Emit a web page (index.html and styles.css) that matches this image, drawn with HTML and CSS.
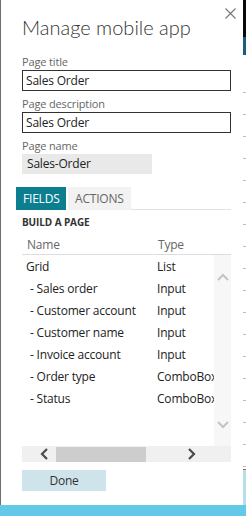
FILE: index.html
```html
<!DOCTYPE html>
<html>
    <head>
        <title>Manage mobile app</title>
        <meta name="viewport" content="width=device-width, initial-scale=1.0">
        <link rel="stylesheet" href="styles.css">
    </head>
    <body>
        <div class="screen">
            <div class="panel">
                <div class="panel-top">
                    <button class="close" title="Close">
                        <svg width="11" height="11" viewBox="0 0 11 11">
                            <path d="M0.5 0.5 L10.5 10.5 M10.5 0.5 L0.5 10.5" stroke="#777" stroke-width="1.1" fill="none"/>
                        </svg>
                    </button>
                </div>
                <h1>Manage mobile app</h1>

                <label class="field-label">Page title</label>
                <input class="field" type="text" value="Sales Order">

                <label class="field-label">Page description</label>
                <input class="field" type="text" value="Sales Order">

                <label class="field-label">Page name</label>
                <div class="field-readonly">Sales-Order</div>

                <div class="tabs">
                    <div class="tab active">FIELDS</div>
                    <div class="tab">ACTIONS</div>
                    <div class="tab-rest"></div>
                </div>

                <div class="section-title">BUILD A PAGE</div>

                <div class="grid">
                    <div class="grid-head">
                        <div class="col-name">Name</div>
                        <div class="col-type">Type</div>
                    </div>
                    <div class="grid-body">
                        <div class="rows">
                            <div class="row"><span class="col-name">Grid</span><span class="col-type">List</span></div>
                            <div class="row child"><span class="col-name">- Sales order</span><span class="col-type">Input</span></div>
                            <div class="row child"><span class="col-name">- Customer account</span><span class="col-type">Input</span></div>
                            <div class="row child"><span class="col-name">- Customer name</span><span class="col-type">Input</span></div>
                            <div class="row child"><span class="col-name">- Invoice account</span><span class="col-type">Input</span></div>
                            <div class="row child"><span class="col-name">- Order type</span><span class="col-type">ComboBox</span></div>
                            <div class="row child"><span class="col-name">- Status</span><span class="col-type">ComboBox</span></div>
                        </div>
                        <div class="vscroll">
                            <svg width="12" height="8" viewBox="0 0 12 8">
                                <path d="M1 7 L6 2 L11 7" stroke="#c4c4c4" stroke-width="2" fill="none"/>
                            </svg>
                            <svg width="12" height="8" viewBox="0 0 12 8">
                                <path d="M1 1 L6 6 L11 1" stroke="#c4c4c4" stroke-width="2" fill="none"/>
                            </svg>
                        </div>
                    </div>
                    <div class="hscroll">
                        <svg class="arrow" width="8" height="12" viewBox="0 0 8 12">
                            <path d="M7 1 L2 6 L7 11" stroke="#4a4a4a" stroke-width="2.2" fill="none"/>
                        </svg>
                        <div class="thumb"></div>
                        <div class="track"></div>
                        <svg class="arrow" width="8" height="12" viewBox="0 0 8 12">
                            <path d="M1 1 L6 6 L1 11" stroke="#4a4a4a" stroke-width="2.2" fill="none"/>
                        </svg>
                    </div>
                </div>

                <button class="done">Done</button>
            </div>
            <div class="backdrop">
                <div class="bd-top"></div>
                <div class="bd-bar"></div>
                <div class="bd-lines"></div>
                <div class="bd-foot"></div>
            </div>
        </div>
        <div class="taskbar"></div>
    </body>
</html>
```

FILE: styles.css
```css
body {
    margin: 0;
    font-family: "Open Sans", "Noto Sans", Arial, sans-serif;
    color: #222;
    background-color: #fff;
}

.screen {
    display: flex;
    height: 505px;
}

.panel {
    width: 243px;
    box-sizing: border-box;
    border-left: 1px solid #6e6e6e;
    padding: 0 12px 0 21px;
    display: flex;
    flex-direction: column;
}

.panel-top {
    display: flex;
    justify-content: flex-end;
    align-items: flex-start;
    height: 15px;
    padding-top: 8px;
    box-sizing: border-box;
    margin-right: -5px;
}

.close {
    border: none;
    background: none;
    padding: 0;
    width: 11px;
    height: 11px;
    flex-shrink: 0;
    cursor: pointer;
}

.close svg {
    display: block;
}

h1 {
    font-family: Lato, "Open Sans", sans-serif;
    font-size: 20px;
    font-weight: 300;
    color: #333;
    margin: 0 0 10px;
    line-height: 24px;
}

.field-label {
    font-size: 11px;
    color: #666;
    line-height: 15px;
    letter-spacing: -0.15px;
    margin: 5px 0 1px;
}

.field {
    width: 209px;
    height: 21px;
    box-sizing: border-box;
    border: 1px solid #333;
    font-family: inherit;
    font-size: 12px;
    letter-spacing: -0.2px;
    color: #222;
    padding: 0 3px;
    margin: 0;
    outline: none;
}

.field-readonly {
    width: 130px;
    height: 20px;
    box-sizing: border-box;
    background-color: #e9e9e9;
    font-size: 12px;
    letter-spacing: -0.2px;
    line-height: 20px;
    padding-left: 5px;
}

.tabs {
    display: flex;
    margin-top: 13px;
    margin-left: -6px;
    width: 215px;
    height: 23px;
}

.tab {
    width: 63px;
    box-sizing: border-box;
    font-size: 12px;
    letter-spacing: -0.2px;
    line-height: 23px;
    padding-left: 7px;
    background-color: #f2f2f2;
    color: #666;
    margin-right: 2px;
}

.tab.active {
    width: 50px;
    background-color: #0b7f8f;
    color: #fff;
}

.tab-rest {
    flex: 1;
    border-bottom: 1px solid #e3e3e3;
    margin-left: -2px;
}

.section-title {
    font-size: 10px;
    font-weight: 700;
    color: #333;
    letter-spacing: -0.1px;
    margin-top: 5px;
    line-height: 14px;
}

.grid {
    margin-top: 7px;
    width: 209px;
}

.grid-head {
    display: flex;
    font-size: 12px;
    letter-spacing: -0.2px;
    color: #666;
    line-height: 18px;
}

.grid-head .col-name {
    width: 131px;
    padding-left: 5px;
    box-sizing: border-box;
    border-bottom: 1px solid #ddd;
    margin-right: 1px;
}

.grid-head .col-type {
    flex: 1;
    padding-left: 4px;
    border-bottom: 1px solid #ddd;
}

.grid-body {
    display: flex;
    height: 191px;
}

.rows {
    flex: 1;
    padding-top: 1px;
    overflow: hidden;
}

.row {
    display: flex;
    font-size: 12px;
    letter-spacing: -0.2px;
    line-height: 22px;
    white-space: nowrap;
}

.row .col-name {
    width: 135px;
    box-sizing: border-box;
    padding-left: 4px;
    flex-shrink: 0;
}

.row.child .col-name {
    padding-left: 8px;
}

.vscroll {
    width: 17px;
    background-color: #f7f7f7;
    display: flex;
    flex-direction: column;
    justify-content: space-between;
    align-items: center;
    padding: 18px 0 17px;
    box-sizing: border-box;
}

.vscroll svg {
    display: block;
}

.hscroll {
    display: flex;
    align-items: center;
    height: 16px;
    background-color: #f0f0f0;
}

.hscroll .arrow {
    display: block;
    margin: 0 8px 0 18px;
}

.hscroll .arrow:last-child {
    margin: 0 35px 0 0;
}

.thumb {
    width: 90px;
    height: 15px;
    background-color: #cdcdcd;
}

.track {
    flex: 1;
}

.done {
    margin-top: 8px;
    width: 84px;
    height: 21px;
    border: none;
    background-color: #cfe4ea;
    font-family: inherit;
    font-size: 12px;
    letter-spacing: -0.2px;
    color: #333;
    padding: 0;
    cursor: pointer;
}

.backdrop {
    flex: 1;
    display: flex;
    flex-direction: column;
    background-color: #fff;
}

.bd-top {
    height: 37px;
    background-color: #0a0a0a;
}

.bd-bar {
    height: 18px;
    background-color: #1d5d78;
}

.bd-lines {
    flex: 1;
    background-image: repeating-linear-gradient(to bottom, transparent 0, transparent 21px, #bdbdbd 21px, #bdbdbd 22px);
    background-position: 0 16px;
}

.bd-foot {
    height: 35px;
    background-color: #b7dfe9;
    border-top: 1px solid #b5651d;
}

.taskbar {
    height: 11px;
    background-color: #64c8e8;
}
```
